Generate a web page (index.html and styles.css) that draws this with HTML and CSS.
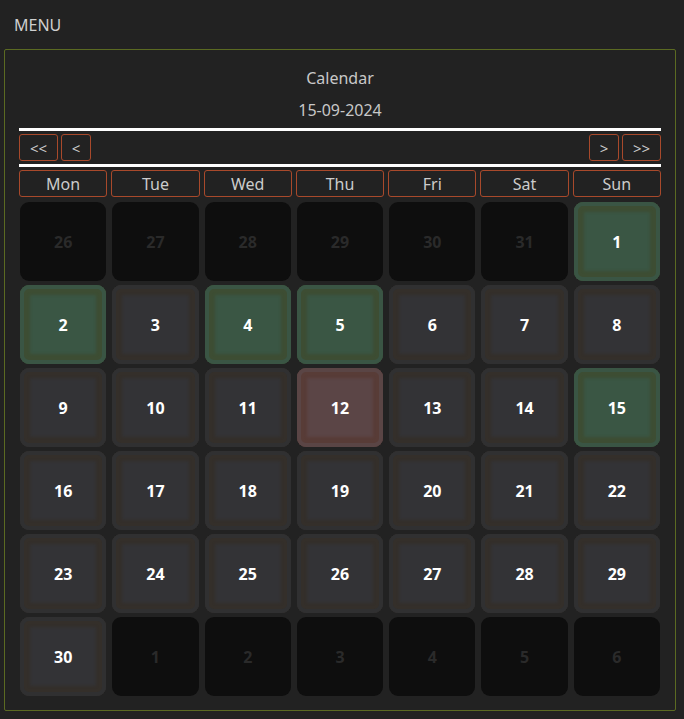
FILE: index.html
```html
<!DOCTYPE html>
<html>
<head>
<meta charset="utf-8">
<link rel="stylesheet" href="styles.css">
</head>
<body>
<div class="menu">MENU</div>
<div class="panel">
  <div class="title">Calendar</div>
  <div class="title">15-09-2024</div>
  <div class="rule"></div>
  <div class="nav">
    <div class="nav-left">
      <button class="btn wide">&lt;&lt;</button>
      <button class="btn">&lt;</button>
    </div>
    <div class="nav-right">
      <button class="btn">&gt;</button>
      <button class="btn wide">&gt;&gt;</button>
    </div>
  </div>
  <div class="rule"></div>
  <div class="heads">
    <div class="head">Mon</div><div class="head">Tue</div><div class="head">Wed</div><div class="head">Thu</div><div class="head">Fri</div><div class="head">Sat</div><div class="head">Sun</div>
  </div>
  <div class="days">
    <div class="day out">26</div><div class="day out">27</div><div class="day out">28</div><div class="day out">29</div><div class="day out">30</div><div class="day out">31</div><div class="day green">1</div>
    <div class="day green">2</div><div class="day">3</div><div class="day green">4</div><div class="day green">5</div><div class="day">6</div><div class="day">7</div><div class="day">8</div>
    <div class="day">9</div><div class="day">10</div><div class="day">11</div><div class="day red">12</div><div class="day">13</div><div class="day">14</div><div class="day green">15</div>
    <div class="day">16</div><div class="day">17</div><div class="day">18</div><div class="day">19</div><div class="day">20</div><div class="day">21</div><div class="day">22</div>
    <div class="day">23</div><div class="day">24</div><div class="day">25</div><div class="day">26</div><div class="day">27</div><div class="day">28</div><div class="day">29</div>
    <div class="day">30</div><div class="day out">1</div><div class="day out">2</div><div class="day out">3</div><div class="day out">4</div><div class="day out">5</div><div class="day out">6</div>
  </div>
</div>
</body>
</html>
```
FILE: styles.css
```css
html, body {
  margin: 0;
  padding: 0;
  background: #222222;
  font-family: "Noto Sans", "Open Sans", sans-serif;
  color: #cccccc;
}
.menu {
  height: 49px;
  line-height: 50px;
  padding-left: 14px;
  font-size: 16px;
  color: #cfcfcf;
}
.panel {
  margin-left: 4px;
  width: 672px;
  box-sizing: border-box;
  border: 1px solid #5b6a22;
  border-radius: 2px;
  padding: 12px 14px 14px 14px;
}
.title {
  height: 32px;
  line-height: 32px;
  text-align: center;
  font-size: 16px;
  color: #c8c8c8;
}
.rule {
  height: 3px;
  background: #ffffff;
  margin-top: 2px;
}
.nav {
  display: flex;
  justify-content: space-between;
  margin: 3px 0;
}
.nav + .rule { margin-top: 0; }
.nav-left, .nav-right {
  display: flex;
  gap: 3px;
}
.btn {
  height: 27px;
  width: 30px;
  box-sizing: border-box;
  background: transparent;
  border: 1px solid #a8492b;
  border-radius: 3px;
  color: #cccccc;
  font-family: "Noto Sans", "Open Sans", sans-serif;
  font-size: 15px;
  padding: 0;
  line-height: 24px;
}
.btn.wide { width: 39px; }
.heads {
  display: grid;
  grid-template-columns: repeat(7, 1fr);
  column-gap: 4px;
  margin-top: 3px;
  margin-bottom: 5px;
}
.head {
  height: 27px;
  box-sizing: border-box;
  border: 1px solid #a8492b;
  border-radius: 3px;
  text-align: center;
  line-height: 26px;
  font-size: 16px;
  color: #cccccc;
}
.days {
  display: grid;
  grid-template-columns: repeat(7, 1fr);
  column-gap: 4px;
  row-gap: 4px;
}
.day {
  height: 79px;
  margin: 0 1px;
  border-radius: 9px;
  display: flex;
  align-items: center;
  justify-content: center;
  font-weight: 700;
  font-size: 16px;
  color: #ffffff;
  background: #333336;
  box-shadow: inset 0 0 0 4px #303031, inset 0 0 3px 10px #342f2a;
}
.day.green {
  background: #3a5644;
  box-shadow: inset 0 0 0 4px #3a5544, inset 0 0 3px 10px #3d4d33;
}
.day.red {
  background: #5b4546;
  box-shadow: inset 0 0 0 4px #5a4545, inset 0 0 3px 10px #583c37;
}
.day.out {
  background: #0e0e0e;
  box-shadow: none;
  color: #2a2a2a;
}
```
